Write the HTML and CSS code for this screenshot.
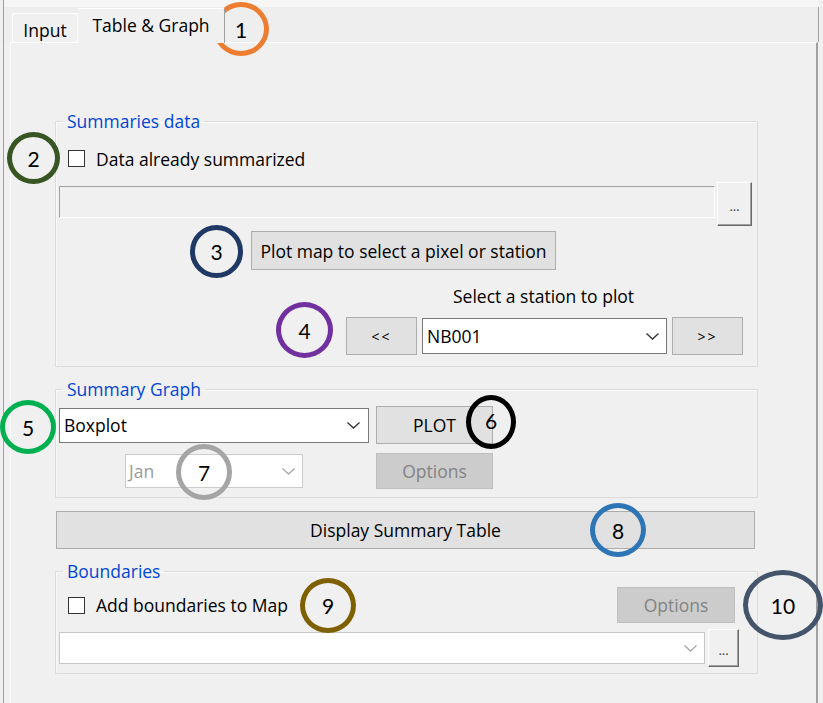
FILE: index.html
```html
<!DOCTYPE html>
<html>
<head>
<meta charset="utf-8">
<title>Table &amp; Graph</title>
<link rel="stylesheet" href="styles.css">
</head>
<body>
<div class="frame">
  <div class="tabstrip">
    <div class="tab">Input</div>
    <div class="tab active">Table &amp; Graph</div>
  </div>
  <div class="panel">
    <fieldset class="group g1">
      <legend>Summaries data</legend>
      <div class="check-row">
        <span class="checkbox"></span><span class="label">Data already summarized</span>
      </div>
      <div class="file-row">
        <div class="textbox"></div>
        <div class="browse tall">...</div>
      </div>
      <div class="btn plotmap">Plot map to select a pixel or station</div>
      <div class="caption">Select a station to plot</div>
      <div class="nav-row">
        <div class="btn nav">&lt;&lt;</div>
        <div class="combo station"><span>NB001</span><svg class="chev" width="13" height="7" viewBox="0 0 13 7"><polyline points="0.5,0.5 6.5,6 12.5,0.5" /></svg></div>
        <div class="btn nav">&gt;&gt;</div>
      </div>
    </fieldset>

    <fieldset class="group g2">
      <legend>Summary Graph</legend>
      <div class="graph-row1">
        <div class="combo boxplot"><span>Boxplot</span><svg class="chev" width="13" height="7" viewBox="0 0 13 7"><polyline points="0.5,0.5 6.5,6 12.5,0.5" /></svg></div>
        <div class="btn plot">PLOT</div>
      </div>
      <div class="graph-row2">
        <div class="combo jan"><span>Jan</span><svg class="chev light" width="13" height="7" viewBox="0 0 13 7"><polyline points="0.5,0.5 6.5,6 12.5,0.5" /></svg></div>
        <div class="btn disabled opt1">Options</div>
      </div>
    </fieldset>

    <div class="btn display">Display Summary Table</div>

    <fieldset class="group g3">
      <legend>Boundaries</legend>
      <div class="bound-row1">
        <span class="checkbox"></span><span class="label">Add boundaries to Map</span>
        <div class="btn disabled opt2">Options</div>
      </div>
      <div class="bound-row2">
        <div class="combo boundcombo"><span></span><svg class="chev light" width="13" height="7" viewBox="0 0 13 7"><polyline points="0.5,0.5 6.5,6 12.5,0.5" /></svg></div>
        <div class="browse short">...</div>
      </div>
    </fieldset>
  </div>
</div>

<div class="ann a1">1</div>
<div class="ann a2">2</div>
<div class="ann a3">3</div>
<div class="ann a4">4</div>
<div class="ann a5">5</div>
<div class="ann a6">6</div>
<div class="ann a7">7</div>
<div class="ann a8">8</div>
<div class="ann a9">9</div>
<div class="ann a10">10</div>
</body>
</html>
```

FILE: styles.css
```css
* { box-sizing: border-box; }
html, body { margin: 0; padding: 0; }
body {
  width: 823px;
  height: 703px;
  overflow: hidden;
  position: relative;
  background: #f0f0f0;
  font-family: "Open Sans", "Noto Sans", sans-serif;
  font-size: 17.5px;
  color: #000;
}

.frame {
  margin-left: 3px;
  width: 816px;
  height: 703px;
  border-left: 1px solid #a0a0a0;
  display: flex;
  flex-direction: column;
  background: linear-gradient(#f6f6f6 0 7px, #f0f0f0 7px);
}

.tabstrip {
  height: 35px;
  margin-top: 7px;
  display: flex;
  align-items: flex-end;
  padding-left: 8px;
  border-right: 1px solid #a0a0a0;
  background: #eeeeee;
}

.tab {
  height: 29px;
  width: 66px;
  display: flex;
  align-items: center;
  justify-content: center;
  border: 1px solid #fff;
  border-bottom: none;
  border-radius: 2px 2px 0 0;
  padding-top: 3px;
  background: #f0f0f0;
}

.tab.active {
  width: 147px;
  height: 35px;
  margin-bottom: -1px;
  border-left: none;
  border-right: 1px solid #a0a0a0;
  background: #f0f0f0;
  position: relative;
  z-index: 1;
  padding-top: 0;
  padding-bottom: 2px;
}

.panel {
  flex: 1;
  margin-left: 6px;
  margin-right: 1px;
  border-left: 1px solid #fff;
  border-top: 1px solid #fff;
  border-right: 2px solid #a0a0a0;
  padding-left: 44px;
  background: #f0f0f0;
}

.group {
  margin: 0;
  padding: 0;
  width: 703px;
  min-width: 0;
  border: 1px solid #dcdcdc;
  box-shadow: inset 1px 1px 0 #fafafa;
}
.group legend {
  margin-left: 7px;
  padding: 0 4px;
  line-height: 22px;
  color: #0046d5;
}

.g1 { margin-top: 67px; padding-bottom: 11px; }
.g2 { margin-top: 11px; padding-bottom: 8px; }
.g3 { margin-top: 11px; padding-bottom: 6px; }

.checkbox {
  width: 17px;
  height: 17px;
  border: 1px solid #333;
  background: #fff;
  flex: none;
}
.label { margin-left: 11px; line-height: 22px; }

.check-row {
  display: flex;
  align-items: center;
  height: 17px;
  margin: 18px 0 0 12px;
}

.file-row {
  display: flex;
  align-items: flex-start;
  gap: 2px;
  margin: 15px 0 0 3px;
}
.textbox {
  width: 656px;
  height: 32px;
  margin-top: 4px;
  background: #f0f0f0;
  border-style: solid;
  border-width: 1px;
  border-color: #a0a0a0 #fff #fff #a0a0a0;
}

.browse {
  display: flex;
  align-items: center;
  justify-content: center;
  background: #f0f0f0;
  border-style: solid;
  border-width: 1px;
  border-color: #fff #696969 #696969 #fff;
  box-shadow: inset -1px -1px 0 #a0a0a0;
  font-size: 13px;
  color: #334;
  padding-top: 3px;
}
.browse.tall { width: 35px; height: 44px; }
.browse.short { width: 31px; height: 38px; }

.btn {
  display: flex;
  align-items: center;
  justify-content: center;
  background: #e1e1e1;
  border: 1px solid #adadad;
}
.btn.disabled {
  background: #cccccc;
  border-color: #bfbfbf;
  color: #838383;
}

.plotmap { width: 305px; height: 39px; margin: 5px 0 0 195px; }
.caption { margin: 15px 0 0 397px; line-height: 22px; }

.nav-row {
  display: flex;
  align-items: center;
  gap: 5px;
  margin: 10px 0 0 290px;
}
.nav { width: 71px; height: 38px; font-size: 14px; letter-spacing: 2px; }

.combo {
  display: flex;
  align-items: center;
  justify-content: space-between;
  background: #fff;
  border: 1px solid #7a7a7a;
  padding: 0 7px 0 4px;
}
.chev polyline { fill: none; stroke: #333; stroke-width: 1.3; }
.chev.light polyline { stroke: #a8a8a8; }

.station { width: 245px; height: 36px; }

.graph-row1 {
  display: flex;
  align-items: center;
  gap: 7px;
  margin: 6px 0 0 3px;
}
.boxplot { width: 310px; height: 35px; padding-right: 8px; }
.plot { width: 117px; height: 38px; }

.graph-row2 {
  display: flex;
  align-items: center;
  gap: 73px;
  margin: 9px 0 0 69px;
}
.jan { width: 178px; height: 34px; border-color: #cccccc; color: #9a9a9a; padding-left: 3px; }
.opt1 { width: 117px; height: 36px; }

.display { width: 699px; height: 38px; margin: 13px 0 0 1px; }

.bound-row1 {
  display: flex;
  align-items: center;
  height: 36px;
  margin: 5px 22px 0 12px;
}
.opt2 { width: 118px; height: 36px; margin-left: auto; }

.bound-row2 {
  display: flex;
  align-items: center;
  gap: 3px;
  margin: 6px 0 0 3px;
}
.boundcombo { width: 646px; height: 32px; border-color: #c8c8c8; }

/* annotation callouts drawn over the dialog */
.ann {
  position: absolute;
  border: 5px solid #000;
  border-radius: 50%;
  display: flex;
  align-items: center;
  justify-content: center;
  font-family: Lato, "Open Sans", sans-serif;
  font-size: 21px;
  color: #000;
}
.a1 { left: 213px; top: 2px; width: 56px; height: 54px; border-color: #ed7d31; }
.a2 { left: 7px; top: 132px; width: 53px; height: 52px; border-color: #375623; }
.a3 { left: 190px; top: 225px; width: 53px; height: 53px; border-color: #1f3864; }
.a4 { left: 276px; top: 302px; width: 57px; height: 56px; border-color: #7030a0; }
.a5 { left: 0px; top: 400px; width: 56px; height: 54px; border-color: #00b050; }
.a6 { left: 466px; top: 395px; width: 50px; height: 54px; border-color: #000; padding-bottom: 3px; }
.a7 { left: 176px; top: 444px; width: 56px; height: 56px; border-color: #a5a5a5; }
.a8 { left: 590px; top: 503px; width: 56px; height: 54px; border-color: #2e75b6; }
.a9 { left: 300px; top: 578px; width: 56px; height: 55px; border-color: #7f6000; }
.a10 { left: 743px; top: 570px; width: 80px; height: 70px; border-color: #44546a; }
```
